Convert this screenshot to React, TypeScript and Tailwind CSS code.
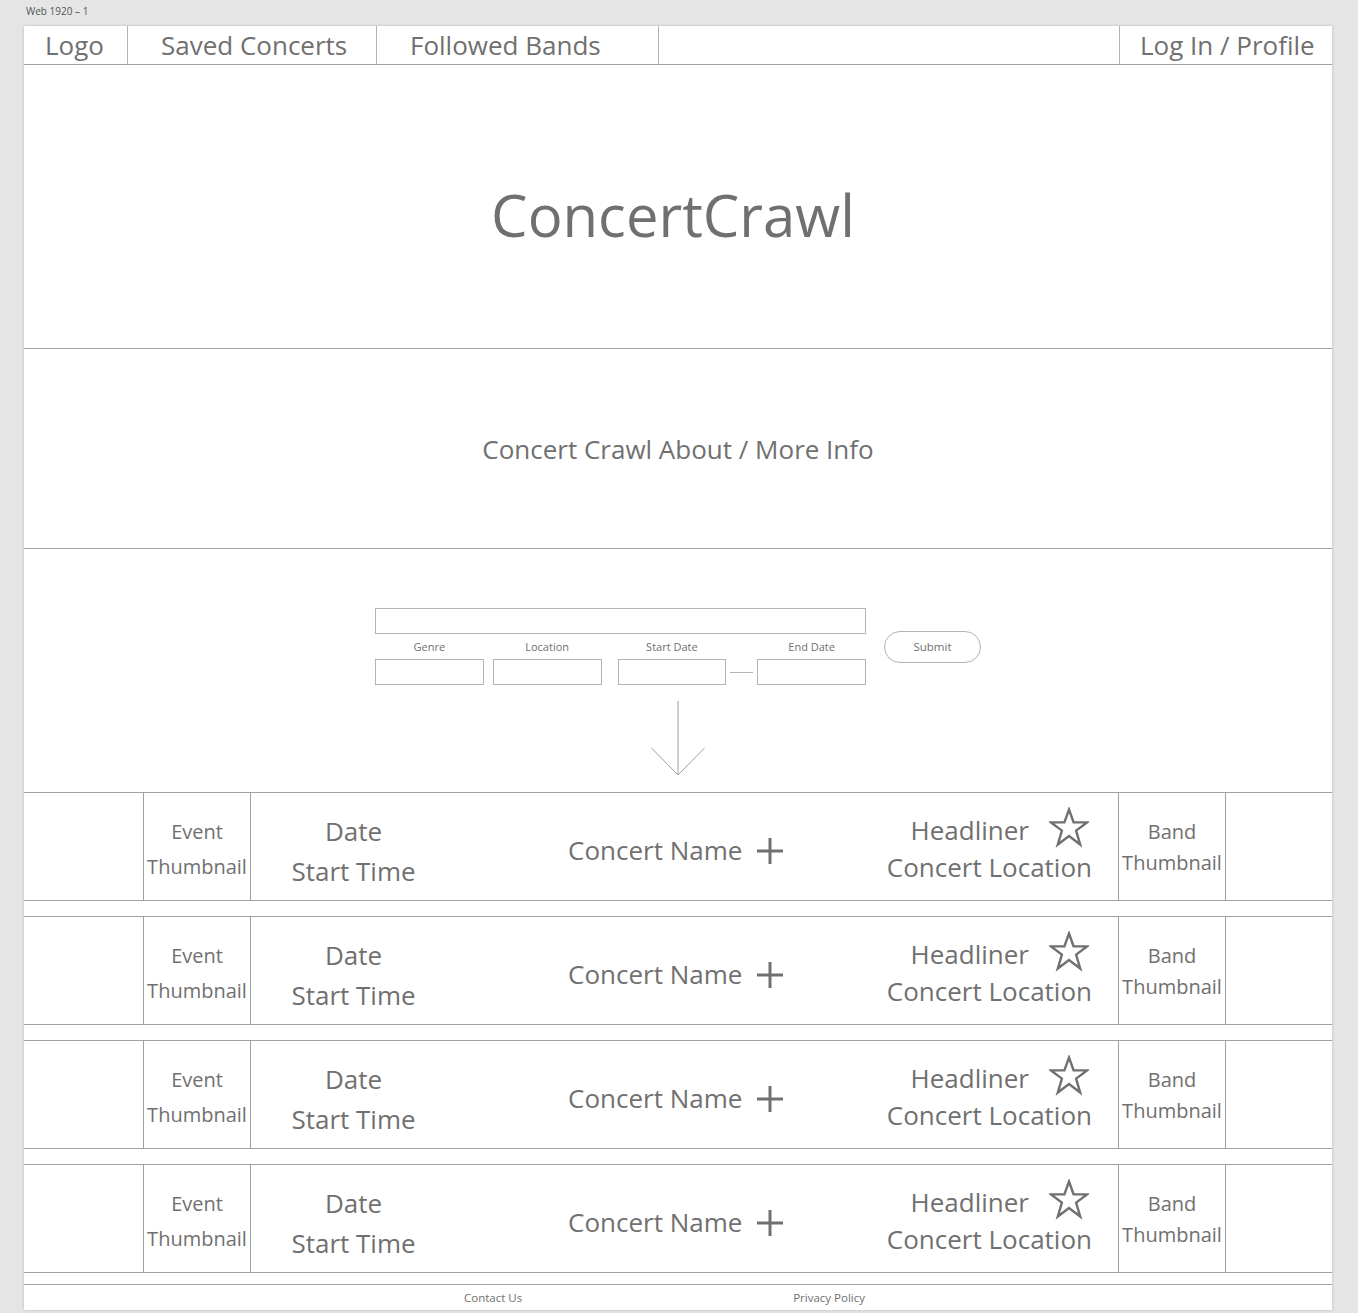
import React from 'react'

const rows = [1, 2, 3, 4]

function Star() {
  return (
    <svg width="40" height="41" viewBox="0 0 40 41" fill="none" className="shrink-0">
      <polygon
        points="20,2.5 24.6,15.4 38,15.4 27.1,23.6 31.2,37.5 20,29 8.8,37.5 12.9,23.6 2,15.4 15.4,15.4"
        stroke="#707070"
        strokeWidth="2.4"
        strokeLinejoin="miter"
      />
    </svg>
  )
}

function Plus() {
  return (
    <svg width="26" height="26" viewBox="0 0 26 26" className="shrink-0">
      <line x1="13" y1="0" x2="13" y2="26" stroke="#707070" strokeWidth="3" />
      <line x1="0" y1="13" x2="26" y2="13" stroke="#707070" strokeWidth="3" />
    </svg>
  )
}

function ConcertRow() {
  return (
    <div className="flex h-[109px] border-y border-[#a0a0a0]">
      <div className="w-[119px] shrink-0" />
      {/* Event thumbnail */}
      <div className="flex w-[108px] shrink-0 flex-col items-center justify-center border-x border-[#a0a0a0] pt-[4px] text-[20px] leading-[35px]">
        <span>Event</span>
        <span>Thumbnail</span>
      </div>
      <div className="flex w-[205px] shrink-0 flex-col items-center justify-center pt-[8px] text-[26px] leading-[40px]">
        <span>Date</span>
        <span>Start Time</span>
      </div>
      <div className="w-[112px] shrink-0" />
      <div className="flex items-center gap-[15px] pt-[8px] text-[26px]">
        <span>Concert Name</span>
        <Plus />
      </div>
      <div className="flex-1" />
      {/* Headliner / location */}
      <div className="flex flex-col items-end justify-center pr-[26px] pt-[4px] text-[26px] leading-[37px]">
        <div className="flex items-center">
          <span>Headliner</span>
          <span className="ml-[20px] mr-[3px] -mt-[6px]">
            <Star />
          </span>
        </div>
        <span>Concert Location</span>
      </div>
      {/* Band thumbnail */}
      <div className="flex w-[108px] shrink-0 flex-col items-center justify-center border-x border-[#a0a0a0] text-[20px] leading-[31px]">
        <span>Band</span>
        <span>Thumbnail</span>
      </div>
      <div className="w-[106px] shrink-0" />
    </div>
  )
}

export default function App() {
  return (
    <div
      className="min-h-[1313px] bg-[#e5e5e5] text-[#707070]"
      style={{ fontFamily: '"Open Sans", "Noto Sans", sans-serif' }}
    >
      <div className="pl-[26px] pt-[4px] text-[10px] leading-[14px] text-[#555]">Web 1920 – 1</div>

      <div className="ml-[24px] mt-[8px] w-[1308px] bg-white shadow-[0_0_3px_rgba(0,0,0,0.18)]">
        {/* Nav */}
        <div className="flex h-[39px] border-b border-[#a0a0a0] text-[26px] leading-[38px]">
          <div className="w-[103px] shrink-0 pl-[21px]">Logo</div>
          <div className="w-[249px] shrink-0 border-l border-[#b4b4b4] pl-[33px]">Saved Concerts</div>
          <div className="w-[282px] shrink-0 border-l border-[#b4b4b4] pl-[33px]">Followed Bands</div>
          <div className="flex-1 border-l border-[#b4b4b4]" />
          <div className="w-[213px] shrink-0 border-l border-[#b4b4b4] pl-[20px]">Log In / Profile</div>
        </div>

        {/* Hero */}
        <div className="flex h-[284px] items-center justify-center border-b border-[#a0a0a0] pr-[10px] pt-[16px] text-[58px]">
          ConcertCrawl
        </div>

        {/* About */}
        <div className="flex h-[200px] items-center justify-center border-b border-[#a0a0a0] pt-[2px] text-[26px]">
          Concert Crawl About / More Info
        </div>

        {/* Search */}
        <div className="flex h-[243px] flex-col items-center pt-[59px]">
          <div className="flex items-center gap-[18px]">
            <div className="flex w-[491px] flex-col">
              <div className="h-[26px] border border-[#b4b4b4]" />
              <div className="mt-[6px] flex text-[11px] leading-[14px]">
                <span className="w-[109px] text-center">Genre</span>
                <span className="ml-[9px] w-[109px] text-center">Location</span>
                <span className="ml-[16px] w-[109px] text-center">Start Date</span>
                <span className="ml-[31px] w-[109px] text-center">End Date</span>
              </div>
              <div className="mt-[5px] flex items-center">
                <div className="h-[26px] w-[109px] border border-[#b4b4b4]" />
                <div className="ml-[9px] h-[26px] w-[109px] border border-[#b4b4b4]" />
                <div className="ml-[16px] h-[26px] w-[109px] border border-[#b4b4b4]" />
                <div className="mx-[4px] h-px w-[23px] bg-[#b4b4b4]" />
                <div className="h-[26px] w-[109px] border border-[#b4b4b4]" />
              </div>
            </div>
            <div className="mt-[1px] flex h-[32px] w-[97px] items-center justify-center rounded-full border border-[#b4b4b4] text-[11.5px]">
              Submit
            </div>
          </div>
          <svg width="56" height="76" viewBox="0 0 56 76" className="mt-[16px]">
            <line x1="28" y1="0" x2="28" y2="74" stroke="#a0a0a0" strokeWidth="1" />
            <polyline points="1.5,47 28,74 54.5,47" fill="none" stroke="#a0a0a0" strokeWidth="1" />
          </svg>
        </div>

        {/* Results */}
        <div className="flex flex-col gap-[15px]">
          {rows.map(r => (
            <ConcertRow key={r} />
          ))}
        </div>

        {/* Footer */}
        <div className="mt-[11px] flex h-[26px] border-t border-[#a0a0a0] text-[11.5px] leading-[26px]">
          <span className="ml-[440px]">Contact Us</span>
          <span className="ml-[271px]">Privacy Policy</span>
        </div>
      </div>
    </div>
  )
}
